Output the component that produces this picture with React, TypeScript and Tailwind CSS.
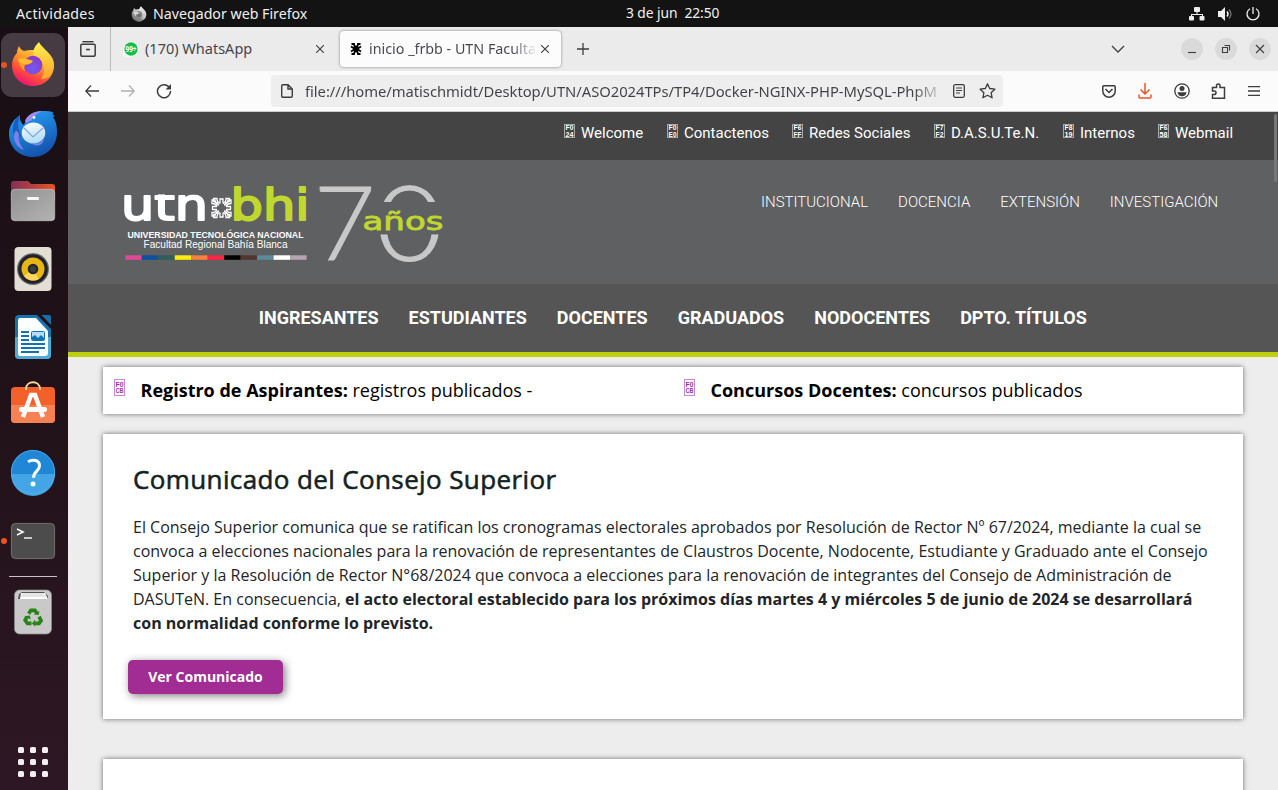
import React from "react";

const UI = "font-['Noto_Sans','Open_Sans',sans-serif]";

function FirefoxMark({ gray = false }: { gray?: boolean }) {
  const id = gray ? "g" : "c";
  return (
    <>
      <defs>
        <linearGradient id={`ffa${id}`} x1="0.8" y1="0.1" x2="0.3" y2="1">
          <stop offset="0" stopColor={gray ? "#f2f2f2" : "#ffe54a"} />
          <stop offset="0.4" stopColor={gray ? "#bbb" : "#ff9a2a"} />
          <stop offset="0.7" stopColor={gray ? "#8a8a8a" : "#ff4a3c"} />
          <stop offset="1" stopColor={gray ? "#777" : "#e6127a"} />
        </linearGradient>
        <linearGradient id={`ffb${id}`} x1="0.5" y1="0" x2="0.6" y2="1">
          <stop offset="0" stopColor={gray ? "#eee" : "#fff04f"} />
          <stop offset="1" stopColor={gray ? "#bbb" : "#ffa32e"} />
        </linearGradient>
        <radialGradient id={`ffc${id}`} cx="0.5" cy="0.7" r="0.7">
          <stop offset="0" stopColor={gray ? "#666" : "#6f5bf5"} />
          <stop offset="1" stopColor={gray ? "#999" : "#9235c4"} />
        </radialGradient>
      </defs>
      <path d="M12 34c0-5 2-9 5-12 0-3 1-5 2-7 1 3 3 4 5 5 3-1 6-1 9-1l12 0c5 4 9 8 9 15 0 12-9 21-21 21s-21-9-21-21z" fill={`url(#ffa${id})`} />
      <path d="M39 11c2 5 11 10 14 19 1 3 1 6 0 10-2 6-7 8-12 8 3-4 4-9 2-14-2-4-8-8-10-11 0-5 3-9 6-12z" fill={`url(#ffb${id})`} />
      <circle cx="33" cy="34" r="9.3" fill={`url(#ffc${id})`} />
      <path d="M18 28c4-1 7 0 9 2 3-1 5 0 5 0-1 3-5 4-7 4-1 2-1 4 0 6-4-2-6-7-7-12z" fill={gray ? "#ccc" : "#ff9c22"} />
      <path d="M18 28c5-2 10 0 15 2-2 3-5 3-8 3-3 0-6-1-7-5z" fill={gray ? "#ddd" : "#ffbd2e"} />
    </>
  );
}

function DockCell({ children, dot = false, active = false }: { children: React.ReactNode; dot?: boolean; active?: boolean }) {
  return (
    <svg width="68" height="68" viewBox="0 0 68 68" className="block shrink-0">
      {active && <rect x="1" y="2" width="64" height="64" rx="11" fill="#463b42" />}
      {dot && <circle cx="4" cy="34" r="3" fill="#e95420" />}
      {children}
    </svg>
  );
}

function Dock() {
  return (
    <aside className="flex w-[68px] shrink-0 flex-col bg-linear-to-b from-[#190e15] via-[#211219] to-[#2e1724] pt-1">
      <DockCell dot active><FirefoxMark /></DockCell>
      <DockCell>
        <defs>
          <linearGradient id="tb" x1="0.3" y1="0" x2="0.7" y2="1"><stop offset="0" stopColor="#269cf5" /><stop offset="1" stopColor="#124ea8" /></linearGradient>
          <linearGradient id="env" x1="0" y1="0" x2="0.3" y2="1"><stop offset="0" stopColor="#fff" /><stop offset="1" stopColor="#b5ddfb" /></linearGradient>
        </defs>
        <path d="M25 24c2-7 9-12 17-12 5 0 9 0 12 2l-2 1 3 2-2 1c3 4 4 9 4 15 0 14-10 25-24 25S9 48 9 35c0-8 4-14 11-19-1 4 1 7 3 10z" fill="url(#tb)" />
        <path d="M25 22c2-6 9-10 17-10-5 3-9 5-10 9l-6 3z" fill="#9c8df0" />
        <path d="M20 16c-2 8-3 13 1 20l-4 5C10 33 12 22 20 16z" fill="#185fbd" />
        <path d="M16 31c-5 9 0 17 8 20-4-5-6-10-5-16z" fill="#7b83e8" />
        <ellipse cx="33.5" cy="34" rx="11.8" ry="10.5" fill="url(#env)" />
        <path d="m24 29 9 9 10-9" fill="none" stroke="#78aadd" strokeWidth="1.2" />
        <path d="M32 45c6 0 10-2 12-5-1 6-6 8-12 5z" fill="#7886e8" />
        <circle cx="34" cy="18.5" r="1.4" fill="#fff" />
      </DockCell>
      <DockCell>
        <defs>
          <linearGradient id="fo" x1="0" y1="0" x2="1" y2="0"><stop offset="0" stopColor="#812f58" /><stop offset="1" stopColor="#ea5425" /></linearGradient>
          <linearGradient id="fg" x1="0" y1="0" x2="1" y2="1"><stop offset="0" stopColor="#919191" /><stop offset="1" stopColor="#b3b3b3" /></linearGradient>
        </defs>
        <path d="M14 14h13q2 0 3 2l1 1h21q3 0 3 3v13H11V17q0-3 3-3z" fill="url(#fo)" />
        <rect x="11.3" y="22.3" width="43.4" height="31.4" rx="3.5" fill="url(#fg)" stroke="#c4c4c4" strokeWidth=".7" />
        <rect x="27" y="30" width="12" height="3" rx="1.3" fill="#f7f7f7" />
      </DockCell>
      <DockCell>
        <rect x="14.5" y="12" width="37" height="44" rx="4" fill="#e4dfd5" />
        <circle cx="33" cy="34" r="16" fill="#6d6d6d" /><circle cx="33" cy="34" r="14.8" fill="#22222d" />
        <circle cx="33" cy="34" r="11.5" fill="#e8b716" /><path d="m33 34-9 7a11.5 11.5 0 0 0 15 3z" fill="#fbd95c" />
        <circle cx="33" cy="34" r="5.3" fill="#24272c" /><circle cx="33" cy="34" r="3" fill="#3c3e40" />
      </DockCell>
      <DockCell>
        <path d="M19 12h18l14 14v26q0 4-4 4H19q-4 0-4-4V16q0-4 4-4z" fill="#1673ad" />
        <path d="M15 34h36v18q0 4-4 4H19q-4 0-4-4z" fill="#4faad8" />
        <path d="M20 15h16l12 13v22q0 3-3 3H20q-2 0-2-3V18q0-3 2-3z" fill="#fff" />
        <path d="M41.5 12H49q2 0 2 2v8z" fill="#1a6fa6" />
        <path d="M21 29h8m-8 4h8m-8 4h8m-8 4h24m-24 4h24m-24 4h18" stroke="#0e73b5" strokeWidth="2" />
        <rect x="31.5" y="28.5" width="13" height="9" rx="1" fill="#b5def5" stroke="#0e73b5" />
        <path d="M32 37v-3l3-2 3 3 3-3 3 3v2z" fill="#0e73b5" />
      </DockCell>
      <DockCell>
        <rect x="11" y="16" width="44" height="36" rx="4" fill="#f36029" />
        <path d="M11 34h44v14q0 4-4 4H15q-4 0-4-4z" fill="#f68152" />
        <path d="M26 19v-1c0-9 14-9 14 0v1" fill="none" stroke="#f8d99c" strokeWidth="1.8" />
        <path d="m23 46 8-22h4l8 22" fill="none" stroke="#fff" strokeWidth="4.5" />
        <rect x="19" y="36" width="28" height="5" rx="2.5" fill="#fff" />
      </DockCell>
      <DockCell>
        <g transform="translate(0 -1)">
          <circle cx="33" cy="34" r="22" fill="#2087d6" /><path d="M11 36a22 22 0 0 0 44 0z" fill="#43a5e5" />
          <circle cx="33" cy="34" r="21.6" fill="none" stroke="#52aeea" strokeWidth=".8" />
          <path d="M28 23.7c5-3 11.500-1.500 11.500 4 0 5.500-6 5.500-6 12" fill="none" stroke="#fff" strokeWidth="3" /><circle cx="33" cy="46" r="2.5" fill="#fff" />
        </g>
      </DockCell>
      <DockCell dot>
        <rect x="11.4" y="16.4" width="43.2" height="35.2" rx="4" fill="#4c4c4c" stroke="#777" strokeWidth=".9" />
        <path d="m17 22 6 3-6 3" fill="none" stroke="#fff" strokeWidth="1.6" /><path d="M24 31h8" stroke="#fff" strokeWidth="1.4" />
      </DockCell>
      <div className="mt-px ml-[9px] h-px w-12 bg-[#c8c0cb]" />
      <div className="pt-px">
        <DockCell>
          <rect x="14.5" y="12" width="37" height="44" rx="5" fill="#c9c9c9" stroke="#8e8e8e" strokeWidth=".7" />
          <path d="m18 21 1-5 3-2h22l4 4v3z" fill="#555" /><path d="m20 21 1-6h24l3 6z" fill="#fff" /><path d="M21 18h25M22 16h22" stroke="#aaa" strokeWidth=".6" />
          <g transform="translate(23.500 31) scale(.8)" fill="none" stroke="#278416" strokeWidth="4.5">
            <path d="m6.5 6 2.700-4.300h5L17 6" /><path d="m19.500 9.500 2.500 5-2.500 3.500h-5" /><path d="M10 18H5l-3-4 2.500-4.500" />
            <path d="m13 7 6 .5 1-5zM14.500 13v9l-4-4zM1 9l7-1 1 5z" fill="#278416" stroke="none" />
          </g>
        </DockCell>
      </div>
      <div className="mx-auto mt-auto mb-[13px] grid -translate-x-px grid-cols-3 gap-[6px]">
        {Array.from({ length: 9 }, (_, i) => <i key={i} className="size-[6px] rounded-[1.5px] bg-[#f1efef]" />)}
      </div>
    </aside>
  );
}

function TopBar() {
  return (
    <header className={`flex h-[27px] shrink-0 items-center bg-[#131313] text-[14.2px] whitespace-pre text-[#f0f0f0] ${UI}`}>
      <span className="w-[115px] pl-4 tracking-[0.27px]">Actividades</span>
      <svg width="16" height="16" viewBox="11 10 44 46" className="mr-[6px] ml-4"><FirefoxMark gray /></svg>
      <span className="w-[473px]">Navegador web Firefox</span>
      <span className="text-[13.8px] tracking-[-0.07px]">3 de jun  22:50</span>
      <span className="mr-[17px] ml-auto flex items-center gap-[12px]">
        <svg width="16" height="14" viewBox="0 0 16 14" fill="#eee"><rect x="5" y="0" width="6" height="5" rx="1" /><rect x="0" y="9" width="5" height="4.5" rx="1" /><rect x="10.5" y="9" width="5" height="4.5" rx="1" /><path d="M7.500 5h1v2H14v2h-1V8H3v1H2V7h5.500z" /></svg>
        <svg width="16" height="16" viewBox="0 0 16 16"><path d="M1 5h3l4-4v14l-4-4H1z" fill="#eee" /><path d="M10 5.500q2 2.500 0 5" fill="none" stroke="#eee" strokeWidth="1.5" /><path d="M12 3.500q4 4.500 0 9" fill="none" stroke="#777" strokeWidth="1.2" /></svg>
        <svg width="16" height="16" viewBox="0 0 16 16" fill="none" stroke="#eee" strokeWidth="1.3"><path d="M5 2.700a6 6 0 1 0 6 0M8 1v7" /></svg>
      </span>
    </header>
  );
}

const line = { fill: "none", stroke: "#3d3d3d", strokeWidth: 1.3 } as const;

function TabStrip() {
  return (
    <div className={`flex h-11 shrink-0 items-center bg-[#ebebeb] text-[14.5px] whitespace-nowrap text-[#45454c] ${UI}`}>
      <div className="flex h-full w-[43px] items-center border-r border-[#bdbdbd] pl-3">
        <svg width="16" height="16" viewBox="0 0 16 16" {...line} strokeWidth="1.5"><path d="M2.500 .7h11" /><path d="M2 3.200h12q1.200 0 1.200 1.200v9q0 1.800-1.800 1.800H2.600Q.8 15.200.8 13.400v-9Q.8 3.200 2 3.200zM6 8.500h4" /></svg>
      </div>
      <svg width="14" height="14" viewBox="0 0 14 14" className="ml-[13px] overflow-visible"><path d="M0 14V7a7 7 0 1 1 7 7z" fill="#fff" stroke="#fff" /><circle cx="7" cy="7" r="6.7" fill="#12bf4c" /><text x="7" y="10" textAnchor="middle" fontSize="8" fontWeight="700" textLength="11" lengthAdjust="spacingAndGlyphs" fill="#fff">99+</text></svg>
      <span className="ml-[7px] w-[171px]">(170) WhatsApp</span>
      <svg width="8" height="8" viewBox="0 0 8 8" {...line} strokeWidth="1.1"><path d="m0 0 8 8m0-8L0 8" /></svg>
      <div className="ml-[16px] flex h-9 w-[221px] items-center rounded bg-[#fcfcfc] pl-[10px] shadow-[0_0_3px_rgba(0,0,0,0.45)]">
        <svg width="12" height="12" viewBox="0 0 12 12" fill="none" stroke="#000" strokeWidth="1.8"><path d="M6 2.500v7M3 6h6M1.500 1H4q0 2 2 5M10.500 1H8q0 2-2 5M1.500 11H4q0-2 2-5M10.500 11H8q0-2-2-5M1 3.500l4 2.500-4 2.500M11 3.500 7 6l4 2.500" /></svg>
        <span className="ml-[7px] w-[168px] overflow-hidden bg-linear-to-r from-[#45454c] from-85% to-transparent bg-clip-text text-[14.3px] text-transparent">inicio _frbb - UTN Faculta</span>
        <svg width="8" height="8" viewBox="0 0 8 8" {...line} strokeWidth="1.1" className="ml-[4px]"><path d="m0 0 8 8m0-8L0 8" /></svg>
      </div>
      <svg width="12" height="12" viewBox="0 0 12 12" {...line} className="ml-[16px]"><path d="M6 0v12M0 6h12" /></svg>
      <svg width="14" height="8" viewBox="0 0 14 8" {...line} className="mr-[56px] ml-auto"><path d="m1 1 6 6 6-6" /></svg>
      <div className="mr-[7px] flex gap-3">
        {["M7 14.500h8", "M7.500 9.500h5V14.500h-5zM9.500 7.500h5V12.500", "m7 7 8 8m0-8-8 8"].map((d) => (
          <svg key={d} width="22" height="22" viewBox="0 0 22 22"><circle cx="11" cy="11" r="11" fill="#dadada" /><path d={d} {...line} strokeWidth="1.1" /></svg>
        ))}
      </div>
    </div>
  );
}

function AddressBar() {
  return (
    <div className={`flex h-[41px] shrink-0 items-center border-b border-[#cccccc] bg-[#fbfbfb] ${UI}`}>
      <svg width="14" height="12" viewBox="0 0 14 12" {...line} className="ml-[17px]"><path d="M14 6H1m5-5.500L.8 6 6 11.500" /></svg>
      <svg width="14" height="12" viewBox="0 0 14 12" {...line} stroke="#b0b0b0" className="ml-[22px]"><path d="M0 6h13M8 .5 13.200 6 8 11.500" /></svg>
      <svg width="16" height="16" viewBox="0 0 16 16" {...line} strokeWidth="1.5" className="ml-[21px]"><path d="M13.500 4.800A6.500 6.500 0 1 0 14.500 8" /><path d="M15 1v5.500H9.500z" fill="#3d3d3d" stroke="none" /></svg>
      <div className="ml-[99px] flex h-8 w-[732px] items-center rounded bg-[#eeeeee] pl-[10px]">
        <svg width="12" height="14" viewBox="0 0 12 14" {...line} strokeWidth="1.4"><path d="M2 .7h5l4.300 4.300v7q0 1.300-1.300 1.300H2Q.7 13.300.7 12V2Q.7.7 2 .7zM7 .7V5h4.300" /></svg>
        <span className="ml-[12px] w-[640px] overflow-hidden bg-linear-to-r from-[#414146] from-95% to-transparent bg-clip-text text-[14.8px] tracking-[-0.045px] whitespace-nowrap text-transparent">file:///home/matischmidt/Desktop/UTN/ASO2024TPs/TP4/Docker-NGINX-PHP-MySQL-PhpM</span>
        <svg width="12" height="14" viewBox="0 0 12 14" {...line} className="ml-2"><rect x=".7" y=".7" width="10.6" height="12.6" rx="1.5" /><path d="M3 4h6M3 6.500h6M3 9h4" strokeWidth="1" /></svg>
        <svg width="17" height="16" viewBox="0 0 17 16" {...line} strokeLinejoin="round" className="ml-[14px]"><path d="m8.500.9 2.200 4.600 5.200.7-3.800 3.500 1 5.100-4.600-2.500-4.600 2.500 1-5.100L1.100 6.200l5.200-.7z" /></svg>
      </div>
      <div className="mr-[18px] ml-auto flex items-center">
        <svg width="14" height="13" viewBox="0 0 14 13" {...line} strokeWidth="1.5"><path d="M2 .8h10q1.200 0 1.200 1.200v4a6.200 6.200 0 0 1-12.400 0V2Q.8.8 2 .8zM3.500 4 7 7.500 10.500 4" /></svg>
        <svg width="14" height="16" viewBox="0 0 14 16" {...line} stroke="#e9562a" strokeWidth="1.5" className="ml-[22px]"><path d="M7 0v11M2.500 6.500 7 11l4.500-4.500M1 11.500V14q0 1 1 1h10q1 0 1-1v-2.500" /></svg>
        <svg width="16" height="16" viewBox="0 0 16 16" className="ml-[22px]"><circle cx="8" cy="8" r="7.2" {...line} /><circle cx="8" cy="5.5" r="2.5" fill="#3d3d3d" /><path d="M3.500 9.200h9q-.5 4-4.500 4t-4.500-4z" fill="#3d3d3d" /></svg>
        <svg width="15" height="16" viewBox="0 0 15 16" {...line} strokeWidth="1.5" className="ml-[21px]"><path d="M1.500 4.500h4V3q0-2 1.800-2T9 3v1.500h4.500v10.700H1.500v-3.700H3q2 0 2-1.800T3 8H1.500z" /></svg>
        <svg width="12" height="10" viewBox="0 0 12 10" {...line} className="ml-[22px]"><path d="M0 .7h12M0 5h12M0 9.300h12" /></svg>
      </div>
    </div>
  );
}

function MissingGlyph({ a, b, tall = false }: { a: string; b: string; tall?: boolean }) {
  return (
    <svg width="11" height={tall ? 17 : 14} viewBox={tall ? "0 -1.5 11 17" : "0 0 11 14"} className="block shrink-0">
      <rect x=".5" y={tall ? -1 : 0.5} width="10" height={tall ? 16 : 13} fill="none" stroke="currentColor" opacity=".55" />
      <g fontFamily="'Liberation Sans', sans-serif" fontWeight="700" fontSize="7.2" fill="currentColor">
        <text x="1.6" y="6.4" textLength="8" lengthAdjust="spacingAndGlyphs">{a}</text>
        <text x="1.6" y="12.6" textLength="8" lengthAdjust="spacingAndGlyphs">{b}</text>
      </g>
    </svg>
  );
}

const quick: [string, string, string, string][] = [
  ["F0", "24", "Welcome", "w-[103px]"],
  ["F0", "E0", "Contactenos", "w-[125px]"],
  ["F6", "FF", "Redes Sociales", "w-[142px]"],
  ["F7", "F2", "D.A.S.U.Te.N.", "w-[129px]"],
  ["F8", "19", "Internos", "w-[95px]"],
  ["F6", "58", "Webmail", "w-[75px]"],
];

function Logo() {
  const stripes = ["#df4a94", "#0d4fa0", "#2f5f58", "#fcee0a", "#f7803d", "#fa2540", "#000", "#513630", "#5a8a9c", "#fff", "#b5a5b3"];
  return (
    <svg width="350" height="110" viewBox="110 170 350 110" className="block">
      <defs>
        <clipPath id="xh"><rect x="120" y="194.5" width="90" height="28" /></clipPath>
        <clipPath id="zero"><path d="M375 180h70v22h-70zM375 234.500h70v32h-70z" /></clipPath>
      </defs>
      <g fontFamily="'DejaVu Sans', sans-serif">
        <g clipPath="url(#xh)"><text x="121" y="220" fontSize="45" fill="#fff" stroke="#fff" strokeWidth="2" strokeLinejoin="round" textLength="87" lengthAdjust="spacingAndGlyphs">utn</text></g>
        <text x="230.5" y="220" fontSize="43" fill="#c0d72f" stroke="#c0d72f" strokeWidth="2" strokeLinejoin="round" textLength="79" lengthAdjust="spacingAndGlyphs">bhi</text>
        <text x="362.5" y="229.500" fontSize="25" fill="#c0d72f" stroke="#c0d72f" strokeWidth=".8" textLength="81" lengthAdjust="spacingAndGlyphs">años</text>
      </g>
      <g transform="translate(221.500 208)" fill="none" stroke="#fff" strokeWidth="1.3">
        {[0, 90, 180, 270].map((r) => (
          <path key={r} transform={`rotate(${r})`} d="M-1.500 -4.500v-4.500h3v4.500M1.500-4.500q3-1 3-5h3.500v3q-4 .5-5 4M-1.500-4.500q-3-1-3-5h-3.500v3q4 .5 5 4" />
        ))}
      </g>
      <g fontFamily="'Liberation Sans', Arial, sans-serif" fill="#fff">
        <text x="127.500" y="237.500" fontSize="9.2" fontWeight="700" textLength="176" lengthAdjust="spacingAndGlyphs">UNIVERSIDAD TECNOLÓGICA NACIONAL</text>
        <text x="143.500" y="248" fontSize="10.3" textLength="144" lengthAdjust="spacingAndGlyphs">Facultad Regional Bahía Blanca</text>
      </g>
      {stripes.map((c, i) => <rect key={c} x={125.3 + i * 16.48} y="255.3" width="16.48" height="4.5" fill={c} />)}
      <g fontFamily="Lato, sans-serif" fontWeight="300" fill="#c8c8c8" stroke="#c8c8c8" strokeWidth="1">
        <text x="313.500" y="260" fontSize="103" textLength="62" lengthAdjust="spacingAndGlyphs">7</text>
        <g clipPath="url(#zero)"><text x="376" y="260.500" fontSize="104" textLength="67" lengthAdjust="spacingAndGlyphs">0</text></g>
      </g>
    </svg>
  );
}

function SiteHeader() {
  return (
    <div className="relative shrink-0 font-['Roboto',sans-serif] whitespace-nowrap text-white">
      <nav className="flex h-12 bg-[#444444] pt-[11px] pl-[496px] text-[15px] leading-5">
        {quick.map(([a, b, label, w]) => (
          <a key={label} className={`flex shrink-0 gap-[6px] ${w}`}><span className="pt-px"><MissingGlyph a={a} b={b} /></span>{label}</a>
        ))}
      </nav>
      <div className="flex h-[124px] items-start bg-[#5f6062] pt-[10px] pl-[42px]">
        <Logo />
        <nav className="ml-[301px] flex gap-[30px] pt-[21px] text-[15px] leading-[22px] font-light">
          <a>INSTITUCIONAL</a><a>DOCENCIA</a><a>EXTENSIÓN</a><a>INVESTIGACIÓN</a>
        </nav>
      </div>
      <nav className="flex h-[73px] gap-[30px] border-b-5 border-[#bfcf0a] bg-[#555555] pt-[22px] pl-[190.7px] text-[18px] leading-6 font-bold">
        <a>INGRESANTES</a><a>ESTUDIANTES</a><a>DOCENTES</a><a>GRADUADOS</a><a>NODOCENTES</a><a>DPTO. TÍTULOS</a>
      </nav>
      <i className="absolute top-[2px] right-[1px] h-[68px] w-[3px] rounded-sm bg-[#777777]" />
    </div>
  );
}

const card = "w-[1140px] bg-white shadow-[0_0_5px_rgba(0,0,0,0.55)]";

function Content() {
  return (
    <main className="flex min-h-0 grow flex-col overflow-hidden bg-[#ededed] pt-[10px] pl-[35px] font-['Open_Sans',sans-serif] whitespace-nowrap">
      <section className={`${card} flex h-[47px] shrink-0 pl-[11px] text-[18px] leading-[47px] text-black`}>
        <div className="flex w-[570px]"><span className="mr-[15.5px] pt-[12px] text-[#9a2ba6]"><MissingGlyph a="F0" b="CB" tall /></span><span><b>Registro de Aspirantes:</b> registros publicados -</span></div>
        <div className="flex"><span className="mr-[15.5px] pt-[12px] text-[#9a2ba6]"><MissingGlyph a="F0" b="CB" tall /></span><span><b>Concursos Docentes:</b> concursos publicados</span></div>
      </section>
      <section className={`${card} mt-5 h-[285px] shrink-0 pt-[29px] pl-[30px] text-[#212529]`}>
        <h1 className="text-[26px] leading-8 tracking-[0.38px] text-[#14221f] [-webkit-text-stroke:0.55px_#14221f]">Comunicado del Consejo Superior</h1>
        <p className="mt-5 text-[16px] leading-6">
          El Consejo Superior comunica que se ratifican los cronogramas electorales aprobados por Resolución de Rector Nº 67/2024, mediante la cual se<br />
          convoca a elecciones nacionales para la renovación de representantes de Claustros Docente, Nodocente, Estudiante y Graduado ante el Consejo<br />
          Superior y la Resolución de Rector N°68/2024 que convoca a elecciones para la renovación de integrantes del Consejo de Administración de<br />
          DASUTeN. En consecuencia, <b>el acto electoral establecido para los próximos días martes 4 y miércoles 5 de junio de 2024 se desarrollará</b><br />
          <b>con normalidad conforme lo previsto.</b>
        </p>
        <button className="mt-[25px] -ml-[5px] h-[34px] w-[155px] rounded-[5px] bg-[#a02c94] pb-[2px] text-[14px] font-bold text-white shadow-[2px_2px_8px_rgba(0,0,0,0.5)]">Ver Comunicado</button>
      </section>
      <section className={`${card} mt-10 h-40 shrink-0`} />
    </main>
  );
}

export default function App() {
  return (
    <div className="flex h-[790px] w-[1278px] flex-col overflow-hidden">
      <TopBar />
      <div className="flex min-h-0 grow">
        <Dock />
        <div className="flex min-w-0 grow flex-col">
          <TabStrip />
          <AddressBar />
          <SiteHeader />
          <Content />
        </div>
      </div>
    </div>
  );
}
